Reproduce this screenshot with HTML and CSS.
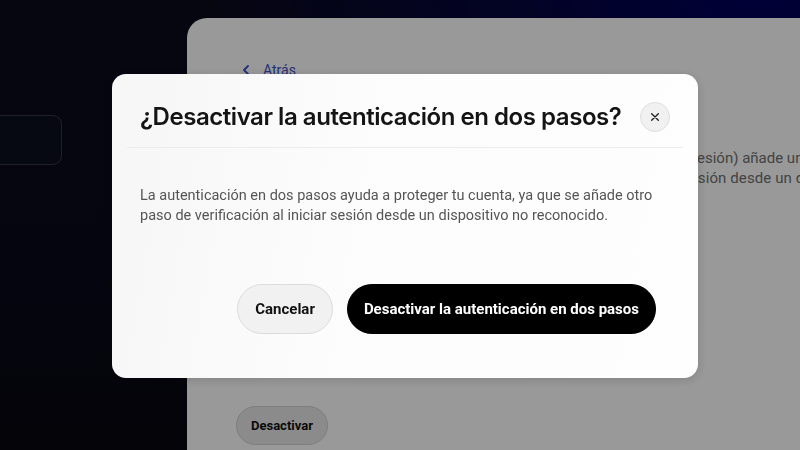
FILE: index.html
```html
<!DOCTYPE html>
<html lang="es">
<head>
<meta charset="utf-8">
<title>Desactivar la autenticación en dos pasos</title>
<link rel="stylesheet" href="styles.css">
</head>
<body>
<div class="page">
  <aside class="sidebar">
    <div class="side-box"></div>
  </aside>
  <main class="panel">
    <a class="back" href="#">
      <svg class="back-icon" viewBox="0 0 12 12" width="12" height="12"><path d="M8 2 4 6l4 4" fill="none" stroke="currentColor" stroke-width="1.8" stroke-linecap="round" stroke-linejoin="round"/></svg>
      <span>Atrás</span>
    </a>
    <p class="panel-text">
      <span class="line">La verificación en dos pasos (también llamada verificación al iniciar sesión) añade una capa</span>
      <span class="line line-wide">de seguridad a tu cuenta, ya que se pide un código cuando inicias sesión desde un dispositivo nuevo.</span>
    </p>
    <button class="btn-ghost">Desactivar</button>
  </main>
</div>

<div class="overlay"></div>

<div class="modal" role="dialog" aria-labelledby="modal-title">
  <header class="modal-head">
    <h2 id="modal-title" class="modal-title">¿Desactivar la autenticación en dos pasos?</h2>
    <button class="close" aria-label="Cerrar">
      <svg viewBox="0 0 12 12" width="10" height="10"><path d="M2 2l8 8M10 2l-8 8" stroke="currentColor" stroke-width="1.6" stroke-linecap="round"/></svg>
    </button>
  </header>
  <div class="modal-body">
    <p>La autenticación en dos pasos ayuda a proteger tu cuenta, ya que se añade otro paso de verificación al iniciar sesión desde un dispositivo no reconocido.</p>
  </div>
  <footer class="modal-foot">
    <button class="btn btn-secondary">Cancelar</button>
    <button class="btn btn-primary">Desactivar la autenticación en dos pasos</button>
  </footer>
</div>
</body>
</html>
```
FILE: styles.css
```css
* { box-sizing: border-box; }
html, body { margin: 0; height: 100%; }
body {
  font-family: Roboto, "Liberation Sans", Arial, sans-serif;
  background:
    radial-gradient(ellipse 70% 40% at 95% 0%, #00005e 0%, rgba(0,0,94,0.5) 45%, rgba(0,0,0,0) 100%),
    linear-gradient(180deg, #0a0a1c 0%, #09091a 60%, #08080f 100%);
  overflow: hidden;
}
.page {
  display: flex;
  height: 100%;
  padding-top: 18px;
}
.sidebar {
  width: 187px;
  flex: none;
  padding-top: 97px;
}
.side-box {
  width: 104px;
  height: 50px;
  margin-left: -42px;
  border: 1px solid #323648;
  border-radius: 9px;
  background: #0d0f1f;
}
.panel {
  flex: 1;
  min-width: 0;
  background: #ffffff;
  border-radius: 20px 0 0 0;
  padding: 42px 0 0 49px;
  overflow: hidden;
  display: flex;
  flex-direction: column;
  align-items: flex-start;
}
.back {
  display: flex;
  align-items: center;
  gap: 11px;
  padding-left: 4px;
  color: #3c52c6;
  text-decoration: none;
  font-size: 14px;
  height: 20px;
}
.back-icon { flex: none; }
.panel-text {
  margin: 68px 0 0;
  color: #707070;
  font-size: 15px;
  line-height: 20px;
}
.line { display: block; white-space: nowrap; }
.line-wide { letter-spacing: 0.1px; }
.btn-ghost {
  margin-top: 218px;
  height: 39px;
  padding: 0 14px;
  border-radius: 20px;
  border: 1px solid #d2d2d2;
  background: #e8e8e8;
  font-family: Roboto, "Liberation Sans", sans-serif;
  font-weight: 700;
  font-size: 13px;
  color: #111;
}
.overlay {
  position: fixed;
  inset: 0;
  background: rgba(0, 0, 0, 0.4);
}
.modal {
  position: fixed;
  left: 112px;
  top: 74px;
  width: 586px;
  height: 304px;
  background: linear-gradient(100deg, #f6f6f6 0%, #fcfcfc 40%, #fefefe 100%);
  border-radius: 14px;
  display: flex;
  flex-direction: column;
  box-shadow: 0 2px 12px rgba(0,0,0,0.15);
}
.modal-head {
  margin: 0 15px;
  height: 74px;
  padding: 12px 13px 0;
  display: flex;
  align-items: center;
  justify-content: space-between;
  border-bottom: 1px solid #ececec;
}
.modal-title {
  margin: 0;
  font-family: Inter, "Noto Sans", sans-serif;
  font-weight: 600;
  font-size: 24px;
  letter-spacing: -0.45px;
  color: #141414;
}
.close {
  width: 30px;
  height: 30px;
  border-radius: 50%;
  border: 1px solid #dedede;
  background: #f1f1f1;
  color: #222;
  display: flex;
  align-items: center;
  justify-content: center;
  padding: 0;
}
.modal-body {
  padding: 38px 28px 0;
}
.modal-body p {
  margin: 0;
  font-size: 14.5px;
  line-height: 20px;
  color: #555;
}
.modal-foot {
  margin-top: auto;
  padding: 0 42px 44px;
  display: flex;
  justify-content: flex-end;
  gap: 14px;
}
.btn {
  height: 50px;
  border-radius: 25px;
  font-family: Roboto, "Liberation Sans", sans-serif;
  font-weight: 700;
  font-size: 15px;
  padding: 0 17px;
}
.btn-secondary {
  background: #f1f1f1;
  border: 1px solid #dcdcdc;
  color: #111;
}
.btn-primary {
  background: #000;
  border: 1px solid #000;
  color: #fff;
  padding: 0 16px;
}
```
